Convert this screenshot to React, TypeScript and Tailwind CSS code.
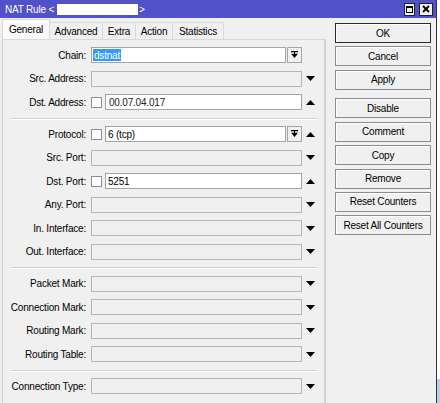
import React from 'react';

const Down = () => (
  <svg width="9" height="5" viewBox="0 0 9 5">
    <path d="M0 0h9L4.5 5z" fill="#000" />
  </svg>
);

const Up = () => (
  <svg width="9" height="5" viewBox="0 0 9 5">
    <path d="M0 5h9L4.5 0z" fill="#000" />
  </svg>
);

const DropIcon = () => (
  <svg width="7" height="8" viewBox="0 0 7 8">
    <path d="M0 0h7v1.2H0zM3 1.2h1v1.6H3zM0 2.8h7L3.5 7z" fill="#000" />
  </svg>
);

function Row({
  label,
  arrow,
  children,
}: {
  label: string;
  arrow?: 'up' | 'down';
  children?: React.ReactNode;
}) {
  return (
    <div className="flex h-[16px] items-center">
      <span className="w-[83px] whitespace-nowrap text-right">{label}</span>
      <div className="ml-[5px] flex h-[16px] w-[211px] items-center">
        {children ?? <div className="h-[16px] w-full border border-[#b5b5b5] bg-[#f0f0f0]" />}
      </div>
      <div className="flex w-[16px] justify-center">
        {arrow === 'down' && <Down />}
        {arrow === 'up' && <Up />}
      </div>
    </div>
  );
}

const Check = () => <div className="h-[11px] w-[11px] shrink-0 border border-[#8f8f8f] bg-white" />;

const Sep = () => <div className="ml-[7px] h-px w-[308px] bg-[#d2d2d2] shadow-[0_1px_0_#ffffff]" />;

const tabs = [
  { name: 'General', w: 'w-[48px]' },
  { name: 'Advanced', w: 'w-[53px]' },
  { name: 'Extra', w: 'w-[33px]' },
  { name: 'Action', w: 'w-[37px]' },
  { name: 'Statistics', w: 'w-[51px]' },
];

const buttons = ['OK', 'Cancel', 'Apply', 'Disable', 'Comment', 'Copy', 'Remove', 'Reset Counters', 'Reset All Counters'];

export default function App() {
  return (
    <div className="flex h-[403px] w-[440px] overflow-hidden bg-white font-['Liberation_Sans',Arial,sans-serif] text-[10px] tracking-[-0.2px] text-black">
      <div className="flex w-[437px] shrink-0 flex-col border-r border-[#333333] bg-[#f0f0f0]">
        {/* title bar */}
        <div className="flex h-[18px] shrink-0 items-center bg-[#5151c8] pl-[5px] text-white">
          <span>NAT Rule &lt;</span>
          <span className="ml-[3px] h-[11px] w-[81px] bg-white" />
          <span className="ml-[1px]">&gt;</span>
          <div className="ml-auto mr-[3px] flex gap-[4px]">
            <div className="flex h-[13px] w-[11px] items-center justify-center border border-[#222] bg-[#f0f0f0]">
              <div className="h-[7px] w-[7px] border border-t-2 border-black" />
            </div>
            <div className="flex h-[13px] w-[14px] items-center justify-center border border-[#222] bg-[#f0f0f0]">
              <svg width="8" height="8" viewBox="0 0 8 8">
                <path d="M1 1l6 6M7 1L1 7" stroke="#000" strokeWidth="1.8" />
              </svg>
            </div>
          </div>
        </div>

        <div className="flex flex-1">
          {/* tabs + panel */}
          <div className="flex w-[326px] flex-col pl-[2px]">
            <div className="flex h-[21px] items-end">
              {tabs.map((t, i) => (
                <div
                  key={t.name}
                  className={`${t.w} flex items-center justify-center border-t border-r border-[#d9d9d9] ${
                    i === 0 ? 'h-[20px] border-l bg-[#fbfbfb]' : 'h-[17px] bg-[#f0f0f0]'
                  }`}
                >
                  {t.name}
                </div>
              ))}
            </div>
            <div className="flex w-[324px] flex-1 flex-col gap-[7.5px] border-t border-l border-r-2 border-[#d0d0d0] border-t-[#d9d9d9] pt-[7px]">
              <Row label="Chain:">
                <div className="flex h-[16px] w-[210px] items-center border border-[#a5a5a5] bg-white pl-px">
                  <span className="flex h-[12px] items-center bg-[#3399ff] px-px text-white">dstnat</span>
                </div>
                <div className="ml-[1px] flex h-[16px] w-[16px] items-center justify-center border border-[#a5a5a5] bg-[#f0f0f0]">
                  <DropIcon />
                </div>
              </Row>
              <Row label="Src. Address:" arrow="down" />
              <Row label="Dst. Address:" arrow="up">
                <Check />
                <div className="ml-[3px] flex h-[16px] w-[197px] items-center border border-[#a5a5a5] bg-white pl-[3px] text-[#222]">
                  00.07.04.017
                </div>
              </Row>
              <Sep />
              <Row label="Protocol:" arrow="up">
                <Check />
                <div className="ml-[3px] flex h-[16px] w-[181px] items-center border border-[#a5a5a5] bg-white pl-[2px]">6 (tcp)</div>
                <div className="ml-[1px] flex h-[16px] w-[15px] items-center justify-center border border-[#a5a5a5] bg-[#f0f0f0]">
                  <DropIcon />
                </div>
              </Row>
              <Row label="Src. Port:" arrow="down" />
              <Row label="Dst. Port:" arrow="up">
                <Check />
                <div className="ml-[3px] flex h-[16px] w-[197px] items-center border border-[#a5a5a5] bg-white pl-[2px]">5251</div>
              </Row>
              <Row label="Any. Port:" arrow="down" />
              <Row label="In. Interface:" arrow="down" />
              <Row label="Out. Interface:" arrow="down" />
              <Sep />
              <Row label="Packet Mark:" arrow="down" />
              <Row label="Connection Mark:" arrow="down" />
              <Row label="Routing Mark:" arrow="down" />
              <Row label="Routing Table:" arrow="down" />
              <Sep />
              <Row label="Connection Type:" arrow="down" />
            </div>
          </div>

          {/* buttons */}
          <div className="ml-[9px] flex w-[96px] flex-col gap-[3.4px] pt-[5px]">
            {buttons.map((b) => (
              <div
                key={b}
                className={`flex h-[20px] items-center justify-center border bg-[#f0f0f0] shadow-[inset_1px_1px_0_#ffffff] ${
                  b === 'OK' ? 'border-[#2a2a2a]' : 'border-[#8c8c8c]'
                } ${b === 'Disable' ? 'mt-[5.2px]' : ''}`}
              >
                {b}
              </div>
            ))}
          </div>
        </div>
      </div>

      {/* background window sliver */}
      <div className="flex flex-1 flex-col bg-white">
        <div className="mt-auto h-[24px] bg-[#b7cfee]" />
      </div>
    </div>
  );
}
